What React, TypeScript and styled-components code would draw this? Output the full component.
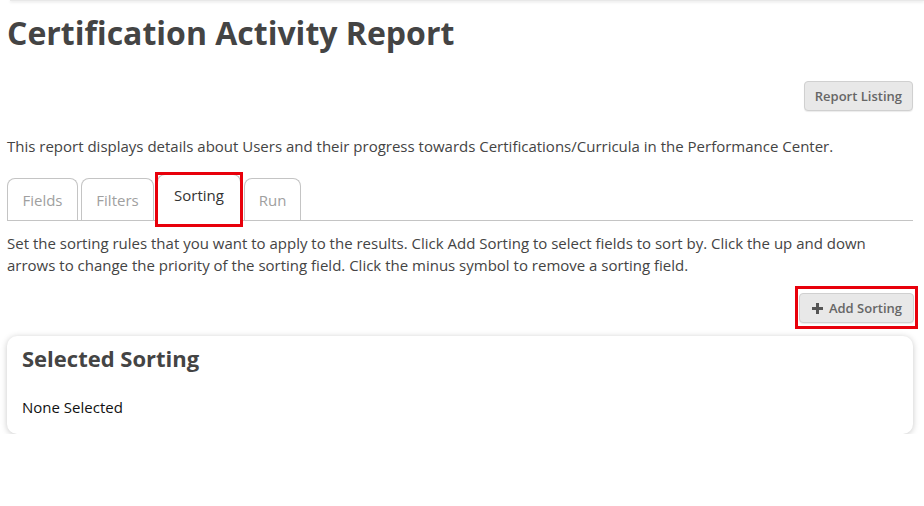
import React from "react";
import styled, { createGlobalStyle } from "styled-components";

const Global = createGlobalStyle`
  html, body { margin: 0; padding: 0; background: #fff; }
  body { font-family: "Open Sans", "Liberation Sans", sans-serif; color: #444; }
  * { box-sizing: border-box; }
`;

const TopEdge = styled.div`
  margin-left: 10px;
  height: 1px;
  background: #e8e8e8;
  box-shadow: 0 1px 3px rgba(0, 0, 0, 0.18);
`;

const Page = styled.div`
  padding: 0 11px 0 7px;
  display: flex;
  flex-direction: column;
`;

const Title = styled.h1`
  margin: 11px 0 0 0;
  font-size: 32px;
  line-height: 42px;
  font-weight: 700;
  color: #444;
`;

const ActionRow = styled.div<{ $top: number }>`
  display: flex;
  justify-content: flex-end;
  margin-top: ${(p) => p.$top}px;
`;

const Highlight = styled.div`
  display: inline-flex;
  padding: 4px 1px 3px 1px;
  margin-right: -5px;
  border: 3px solid #e8000b;
`;

const Button = styled.button`
  display: inline-flex;
  align-items: center;
  gap: 6px;
  height: 30px;
  padding: 0 10px;
  border: 1px solid #d0d0d0;
  border-radius: 4px;
  background: #e8e8e8;
  box-shadow: 0 1px 1px rgba(0, 0, 0, 0.08);
  font-family: "Open Sans", "Liberation Sans", sans-serif;
  font-size: 13px;
  font-weight: 600;
  color: #666;
  cursor: pointer;
`;

const WideButton = styled(Button)`
  padding: 0 11px 0 12px;
`;

const Text = styled.p<{ $top: number }>`
  margin: ${(p) => p.$top}px 0 0 0;
  font-size: 15px;
  line-height: 22px;
  color: #444;
`;

const TabBar = styled.div`
  margin-top: 22px;
  display: flex;
  align-items: flex-end;
  gap: 3px;
  border-bottom: 1px solid #c4c4c4;
  height: 42px;
`;

const Tab = styled.div<{ $active?: boolean; $w: number }>`
  position: relative;
  width: ${(p) => p.$w}px;
  height: ${(p) => (p.$active ? 47 : 42)}px;
  margin-bottom: ${(p) => (p.$active ? -1 : 0)}px;
  display: flex;
  align-items: ${(p) => (p.$active ? "flex-start" : "center")};
  justify-content: center;
  padding-top: ${(p) => (p.$active ? 10 : 0)}px;
  border: 1px solid #c4c4c4;
  border-bottom: ${(p) => (p.$active ? "1px solid #fff" : "none")};
  border-radius: 8px 8px 0 0;
  background: #fff;
  font-size: 15px;
  color: ${(p) => (p.$active ? "#333" : "#a0a0a0")};
`;

const TabOutline = styled.div`
  position: absolute;
  left: -3px;
  right: -3px;
  top: -3px;
  bottom: -7px;
  border: 3px solid #e8000b;
  pointer-events: none;
`;

const Card = styled.section`
  margin-top: 7px;
  padding: 8px 15px 17px;
  border-radius: 10px;
  background: #fff;
  box-shadow: 0 1px 6px rgba(0, 0, 0, 0.22);
`;

const CardTitle = styled.h2`
  margin: 0;
  font-size: 22px;
  line-height: 28px;
  font-weight: 700;
  color: #444;
`;

const CardBody = styled.div`
  margin-top: 25px;
  font-size: 15px;
  line-height: 20px;
  color: #111;
`;

const PlusIcon = () => (
  <svg width="11" height="11" viewBox="0 0 11 11" aria-hidden>
    <path d="M4 0h3v4h4v3H7v4H4V7H0V4h4z" fill="#555" />
  </svg>
);

const tabs = [
  { label: "Fields", w: 71 },
  { label: "Filters", w: 73 },
  { label: "Sorting", w: 84, active: true },
  { label: "Run", w: 57 },
];

export default function App() {
  return (
    <>
      <Global />
      <TopEdge />
      <Page>
        <Title>Certification Activity Report</Title>
        <ActionRow $top={27}>
          <Button>Report Listing</Button>
        </ActionRow>
        <Text $top={24}>
          This report displays details about Users and their progress towards Certifications/Curricula in the Performance Center.
        </Text>
        <TabBar>
          {tabs.map((t) => (
            <Tab key={t.label} $w={t.w} $active={t.active}>
              {t.label}
              {t.active && <TabOutline />}
            </Tab>
          ))}
        </TabBar>
        <Text $top={11}>
          Set the sorting rules that you want to apply to the results. Click Add Sorting to select fields to sort by. Click the up and down arrows to change the priority of the sorting field. Click the minus symbol to remove a sorting field.
        </Text>
        <ActionRow $top={10}>
          <Highlight>
            <WideButton>
              <PlusIcon />
              Add Sorting
            </WideButton>
          </Highlight>
        </ActionRow>
        <Card>
          <CardTitle>Selected Sorting</CardTitle>
          <CardBody>None Selected</CardBody>
        </Card>
      </Page>
    </>
  );
}
